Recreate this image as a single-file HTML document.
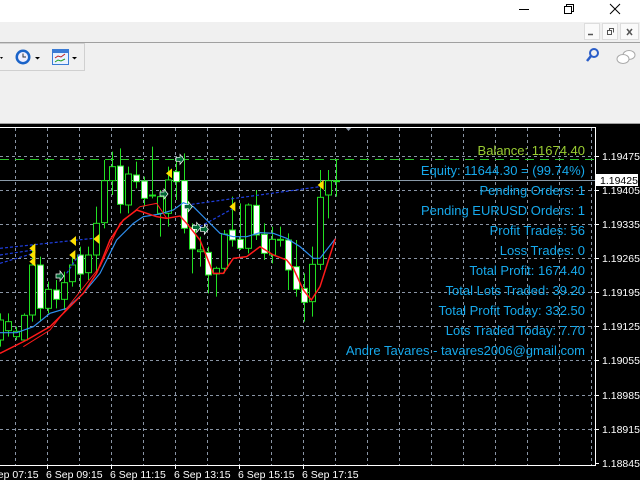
<!DOCTYPE html>
<html><head><meta charset="utf-8"><style>
*{margin:0;padding:0}
body{width:640px;height:480px;overflow:hidden;background:#f0f0f0;position:relative;font-family:"Liberation Sans",Arial,sans-serif}
.abs{position:absolute}
</style></head><body>
<div class="abs" style="left:0;top:0;width:640px;height:22px;background:#fff"></div>
<svg class="abs" style="left:0;top:0" width="640" height="127">
 <line x1="519" y1="9.5" x2="529" y2="9.5" stroke="#000"/>
 <rect x="564.5" y="6.5" width="7" height="7" fill="none" stroke="#000"/>
 <path d="M566.5 6.5V4.5H573.5V11.5H571.5" fill="none" stroke="#000"/>
 <path d="M610 4L620 14M620 4L610 14" stroke="#000"/>
 <rect x="584.5" y="23.5" width="15" height="16" fill="#fafafa" stroke="#ddd"/>
 <rect x="602.5" y="23.5" width="15" height="16" fill="#fafafa" stroke="#ddd"/>
 <rect x="620.5" y="23.5" width="18" height="16" fill="#fafafa" stroke="#ddd"/>
 <line x1="588" y1="34.5" x2="593" y2="34.5" stroke="#555" stroke-width="1.5"/>
 <rect x="607.5" y="30.5" width="4" height="4" fill="none" stroke="#555"/>
 <path d="M609.5 30.5V28.5H613.5V32.5" fill="none" stroke="#555"/>
 <path d="M627 29L632 35M632 29L627 35" stroke="#555" stroke-width="1.5"/>
 <line x1="0" y1="42.5" x2="640" y2="42.5" stroke="#a0a0a0"/>
 <path d="M0 43.5H84.5V70.5H0" fill="none" stroke="#d0d0d0"/>
 <path d="M0 57h3l-1.5 2z" fill="#000"/>
 <circle cx="23" cy="57" r="7.5" fill="#1a63c8"/>
 <circle cx="23" cy="57" r="5" fill="#eef"/>
 <path d="M23 53.5V57H26" stroke="#333" fill="none"/>
 <path d="M35 57h5l-2.5 2.5z" fill="#000"/>
 <rect x="52.5" y="49.5" width="16" height="15" fill="#eaf2ff" stroke="#3a7bd5"/>
 <rect x="53" y="50" width="15" height="3" fill="#3a7bd5"/>
 <path d="M55 58l3-2 3 1 4-3" stroke="#c02020" fill="none"/>
 <path d="M55 62l3-2 3 1 4-2" stroke="#20a020" fill="none"/>
 <path d="M72 57h5l-2.5 2.5z" fill="#000"/>
 <circle cx="594" cy="53" r="4" fill="none" stroke="#2a5dc8" stroke-width="2"/>
 <line x1="591" y1="56" x2="587" y2="61" stroke="#2a5dc8" stroke-width="2.5"/>
 <ellipse cx="629" cy="55" rx="6" ry="4.5" fill="#fff" stroke="#aaa"/>
 <ellipse cx="623" cy="59" rx="6" ry="4.5" fill="#fff" stroke="#aaa"/>
 <line x1="0" y1="123.5" x2="640" y2="123.5" stroke="#a0a0a0"/>
</svg>
<div class="abs" style="left:0;top:124px;width:640px;height:356px;background:#000"></div>
<svg id="ch" class="abs" style="left:0;top:0" width="640" height="480"></svg>
<div class="abs" style="right:55px;top:141px;text-align:right;font-size:13px;line-height:20px;color:#16a9ec;white-space:nowrap">
<div style="color:#9acd32">Balance: 11674.40</div>
<div>Equity: 11644.30 = (99.74%)</div>
<div>Pending Orders: 1</div>
<div>Pending EURUSD Orders: 1</div>
<div>Profit Trades: 56</div>
<div>Loss Trades: 0</div>
<div>Total Profit: 1674.40</div>
<div>Total Lots Traded: 39.20</div>
<div>Total Profit Today: 332.50</div>
<div>Lots Traded Today: 7.70</div>
<div>Andre Tavares - tavares2006@gmail.com</div>
</div>
<script>
var s='';
s+='<path d="M345 127h7l-3.5 4z" fill="#8a95a5"/>';
var gx=[15,47,79,111,143,175,207,239,271,303,335,367,399,431,463,495,527,559,591];
gx.forEach(function(x){s+='<line x1="'+(x+.5)+'" y1="128" x2="'+(x+.5)+'" y2="465" stroke="#8a95a5" stroke-dasharray="3,3"/>';});
[156,190,224,258,292,326,360,395,429].forEach(function(y){s+='<line x1="0" y1="'+(y+.5)+'" x2="595" y2="'+(y+.5)+'" stroke="#8a95a5" stroke-dasharray="3,3"/>';});
s+='<line x1="0" y1="159.5" x2="595" y2="159.5" stroke="#2ec82e" stroke-dasharray="9,6"/>';
s+='<line x1="0" y1="180.5" x2="595" y2="180.5" stroke="#8a9aa8"/>';
s+='<path d="M0 127.5H595.5V465.5H0" fill="none" stroke="#fff"/>';
var c=[[540,600,520,620],[545,572,520,590],[574,590,560,600],[526,600,520,600],[375,525,315,545],[375,505,350,545,1],[448,505,425,520],[450,478,420,505,1],[428,478,395,510],[375,425,340,440],[345,402,320,450,1],[345,398,320,420],[250,345,200,400],[122,248,60,265],[80,122,35,165],[78,193,25,220,1],[102,195,80,220],[105,125,65,145,1],[123,175,110,200,1],[165,168,20,175],[170,220,150,290],[120,220,80,260],[95,125,60,180,1],[122,265,40,280,1],[262,327,250,400,1],[330,335,290,380],[337,405,320,460,1],[385,402,380,470],[282,385,270,400],[270,300,170,320,1],[298,325,190,330,1],[195,325,190,340],[196,285,150,300,1],[283,340,250,360,1],[298,345,260,370],[298,300,260,320],[300,390,280,450,1],[380,448,300,470,1],[445,487,400,545,1],[373,485,320,530],[172,373,90,390],[122,165,90,235],[122,122,60,170]];
c.forEach(function(k,i){var x=i*8+.5,t=k[0]/3+140,b=k[1]/3+140,h=k[2]/3+140,l=k[3]/3+140;
s+='<line x1="'+x+'" y1="'+h+'" x2="'+x+'" y2="'+l+'" stroke="#22e022"/>';
s+='<rect x="'+(x-3)+'" y="'+t+'" width="6" height="'+Math.max(b-t,1)+'" fill="'+(k[4]?'#fff':'#000')+'" stroke="#22e022"/>';});
function pl(p,col,w,d){return '<polyline points="'+p.map(function(q){return q[0]/3+','+(q[1]/3+140)}).join(' ')+'" fill="none" stroke="'+col+'" stroke-width="'+w+'"'+(d?' stroke-dasharray="3,2"':'')+'/>';}
s+=pl([[0,325],[280,295]],'#1f3fe0',1.2,1)+pl([[0,370],[100,340]],'#1f3fe0',1.2,1)+pl([[0,345],[100,330]],'#1f3fe0',1.2,1)+pl([[560,195],[960,140]],'#1f3fe0',1.2,1)+pl([[200,400],[240,340]],'#1f3fe0',1.2,1)+pl([[600,260],[700,205]],'#1f3fe0',1.2,1);
s+=pl([[0,578],[50,578],[100,560],[150,520],[200,505],[250,460],[300,400],[350,300],[400,250],[430,230],[480,222],[520,210],[550,188],[580,200],[620,240],[660,280],[700,290],[740,290],[780,278],[820,280],[860,295],[900,320],[940,355],[960,355],[1006,296]],'#2f8fef',1.2);
s+=pl([[0,640],[80,600],[150,560],[200,510],[250,460],[290,400],[330,300],[370,240],[410,210],[440,220],[470,230],[500,235],[540,228],[560,250],[600,300],[640,400],[670,400],[700,355],[740,350],[780,320],[820,345],[860,360],[880,385],[910,450],[934,480],[960,440],[1006,296]],'#ff1a1a',1.5);
s+=pl([[70,620],[150,570],[220,480],[300,380],[360,250],[420,200],[470,190],[500,235]],'#ff1a1a',1);
[[100,325],[100,345],[100,365],[220,345],[222,303],[292,297],[510,100],[700,200],[965,135]].forEach(function(q){var x=q[0]/3,y=q[1]/3+140;s+='<path d="M'+(x-4)+' '+y+'l6-5v10z" fill="#ffe000"/>';});
[[180,408],[540,58],[492,162],[565,200],[590,262],[613,268]].forEach(function(q){var x=q[0]/3,y=q[1]/3+140;s+='<path d="M'+(x-4)+' '+(y-2)+'h4v-3l4 5-4 5v-3h-4z" fill="#063" stroke="#fff" stroke-width=".7"/>';});
var py=[[1.19475,156],[1.19405,190],[1.19335,224],[1.19265,258],[1.19195,292],[1.19125,326],[1.19055,360],[1.18985,395],[1.18915,429],[1.18845,463]];
py.forEach(function(p){s+='<line x1="595" y1="'+(p[1]+.5)+'" x2="599" y2="'+(p[1]+.5)+'" stroke="#fff"/><text x="602" y="'+(p[1]+4)+'" fill="#fff" font-size="10.5" font-family="Liberation Sans,Arial,sans-serif">'+p[0].toFixed(5)+'</text>';});
s+='<rect x="596" y="174" width="42" height="12" fill="#fff"/><text x="600" y="184" fill="#000" font-size="10.5" font-family="Liberation Sans,Arial,sans-serif">1.19425</text>';
var tl=['6 Sep 07:15','6 Sep 09:15','6 Sep 11:15','6 Sep 13:15','6 Sep 15:15','6 Sep 17:15'];
tl.forEach(function(t,i){var gxp=-17+i*64;s+='<line x1="'+(gxp+.5)+'" y1="465" x2="'+(gxp+.5)+'" y2="469" stroke="#fff"/><text x="'+(gxp-1)+'" y="478" fill="#fff" font-size="10.5" font-family="Liberation Sans,Arial,sans-serif">'+t+'</text>';});
document.getElementById('ch').innerHTML=s;
</script>
</body></html>
